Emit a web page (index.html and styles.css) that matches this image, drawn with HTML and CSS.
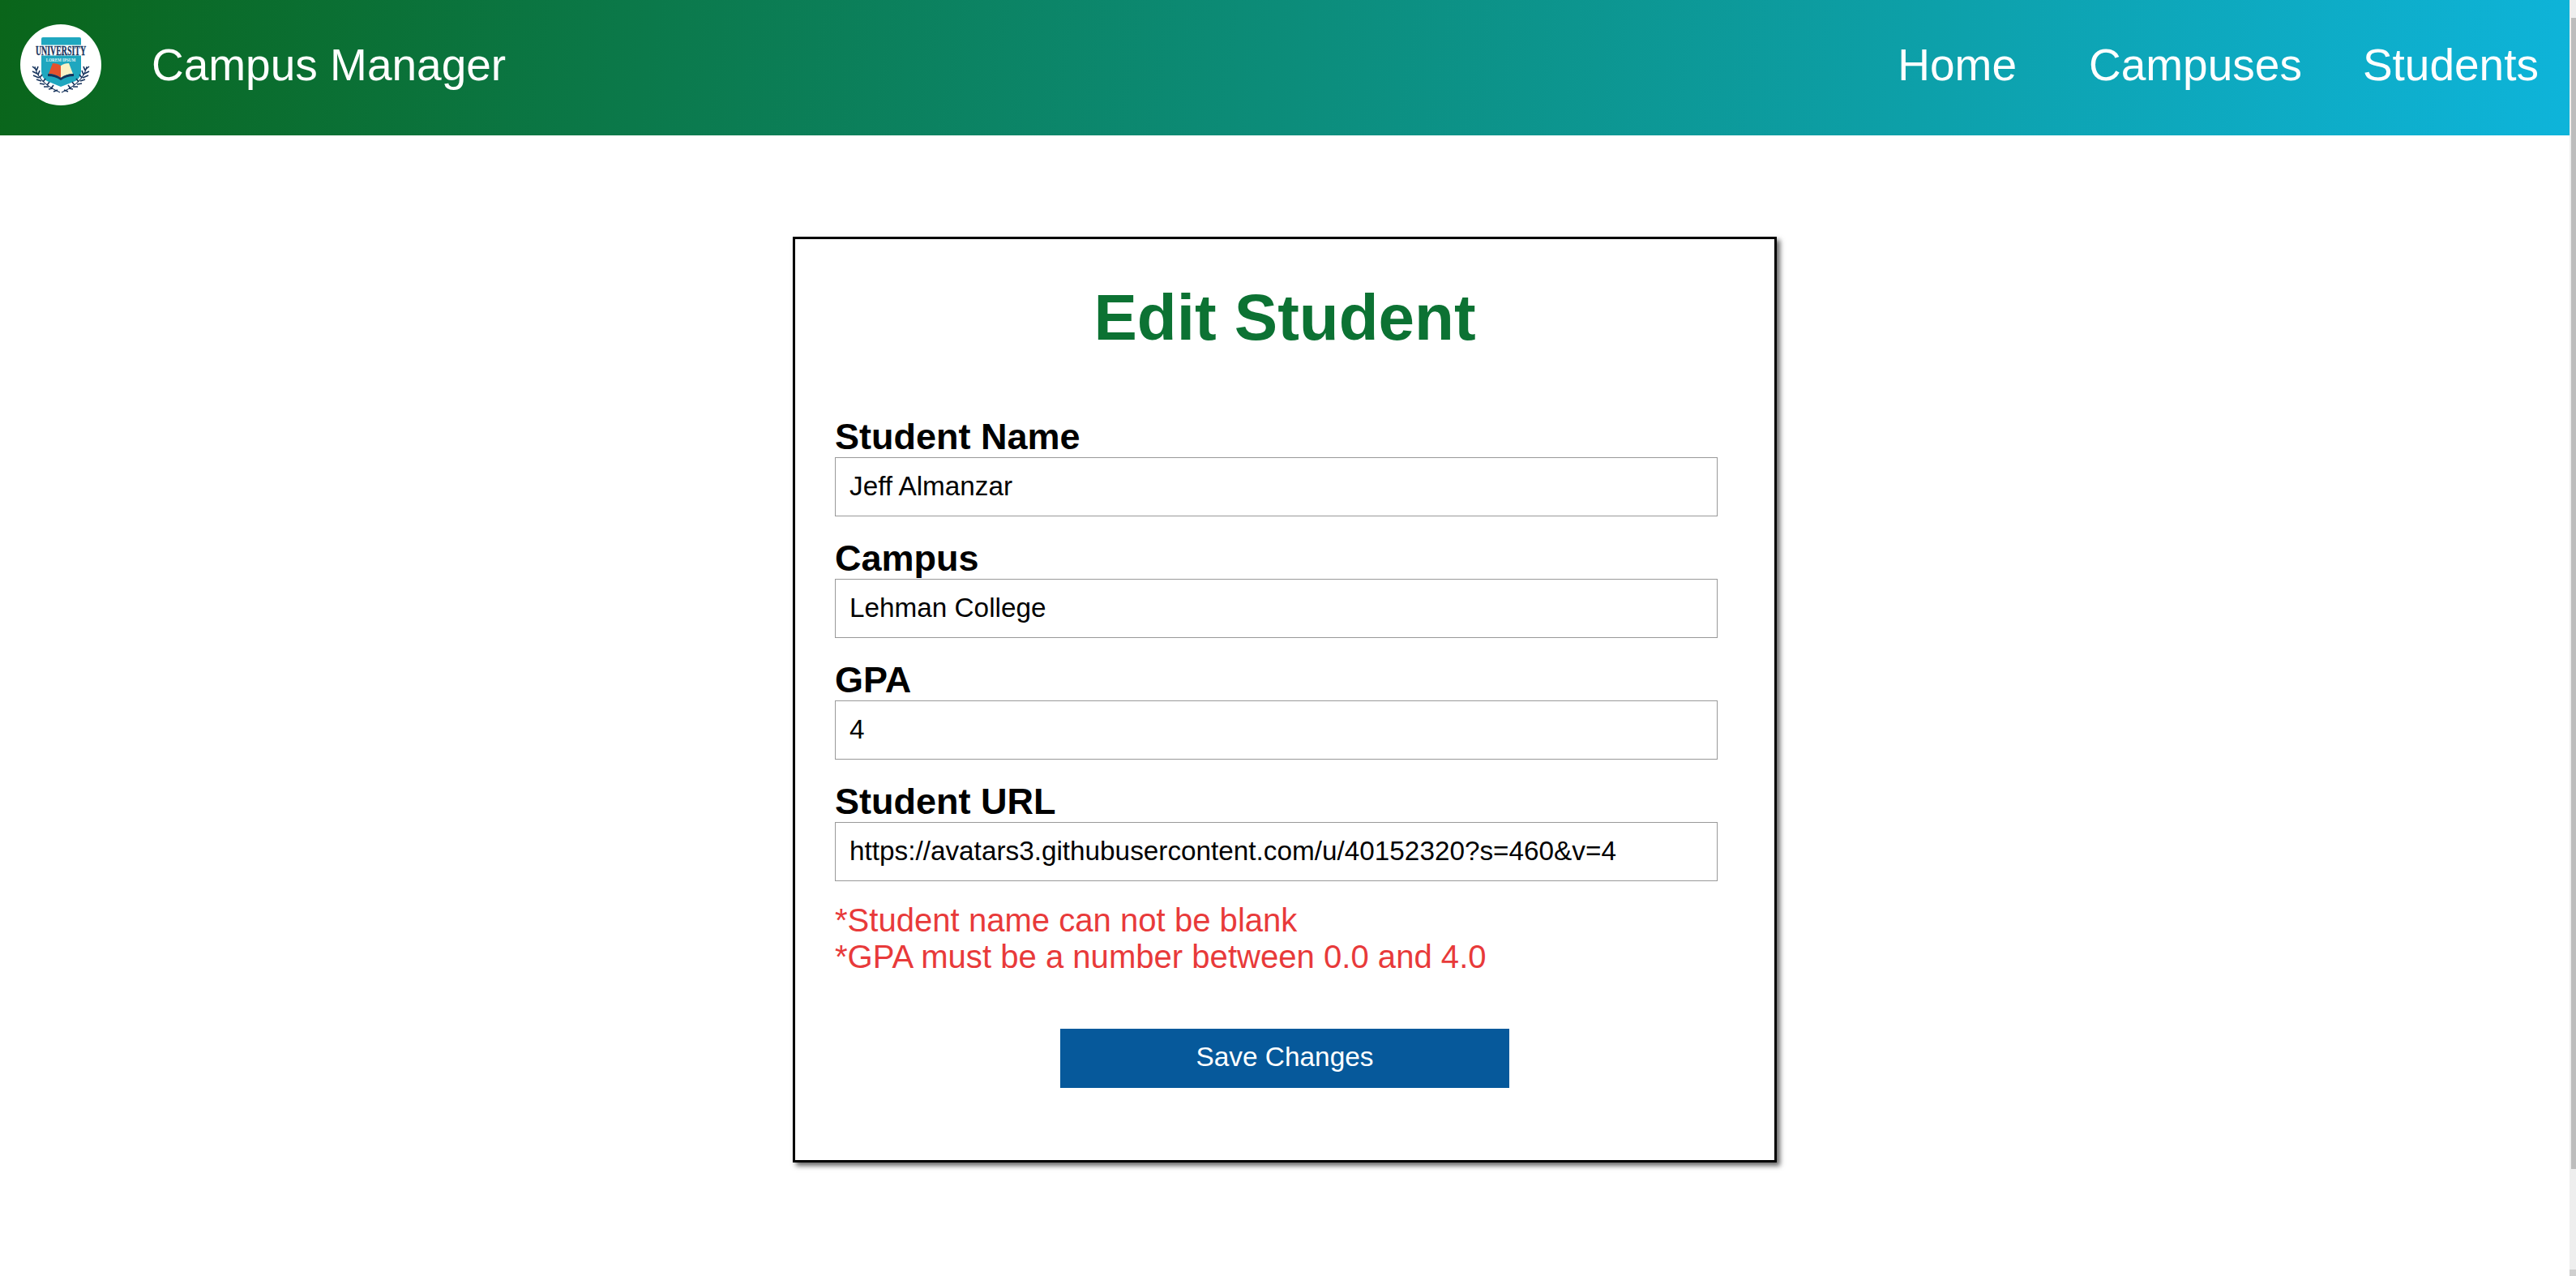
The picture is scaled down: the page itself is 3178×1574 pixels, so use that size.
FILE: index.html
```html
<!DOCTYPE html>
<html lang="en">
<head>
    <meta charset="UTF-8">
    <meta name="viewport" content="width=device-width, initial-scale=1.0">
    <title>Edit Student</title>

    <link rel="stylesheet" href="styles.css">

</head>
<body>

<div class="page">
  <nav class="navbar">
    <div class="nav-logo">
      <svg viewBox="0 0 100 100" width="100" height="100">
        <circle cx="50" cy="50" r="50" fill="#ffffff"/>
        <!-- shield -->
        <path d="M26 18 Q26 16 28 16 L73 16 Q75 16 75 18 L75 58 Q75 66 68 70 L50 77 L33 70 Q26 66 26 58 Z" fill="#1fa7bf"/>
        <rect x="13" y="25.500" width="74" height="13" fill="#ffffff"/>
        <text class="logo-title" transform="translate(50 37.700) scale(0.6 1)">UNIVERSITY</text>
        <text class="logo-sub" transform="translate(50 45.700) scale(0.72 1)">LOREM IPSUM</text>
        <!-- book -->
        <path d="M35 61 L40 48 Q46 48 50 51 L50 66 Q43 61 35 61 Z" fill="#e4512d"/>
        <path d="M50 51 Q54 48 60 48 L65 61 Q57 61 50 66 Z" fill="#fbf1c5"/>
        <path d="M34 61 Q43 61 50 66 Q57 61 66 61 L66 64 Q57 64 50 69 Q43 64 34 64 Z" fill="#16335c"/>
        <!-- laurels -->
        <path d="M18 52 Q22 72 49 84" fill="none" stroke="#16335c" stroke-width="1.200"/>
        <path d="M82 52 Q78 72 51 84" fill="none" stroke="#16335c" stroke-width="1.200"/>
        <path d="M15 52 L20 56 M15 58 L21 61 M16 63 L23 66 M20 68 L26 70 M24 73 L30 74 M29 77 L35 77 M35 80 L40 79 M41 83 L46 81 M22 52 L20 57 M24 57 L22 62 M27 62 L24 66 M31 67 L28 71 M36 71 L33 75 M41 75 L38 79" fill="none" stroke="#16335c" stroke-width="1.600"/>
        <path d="M85 52 L80 56 M85 58 L79 61 M84 63 L77 66 M80 68 L74 70 M76 73 L70 74 M71 77 L65 77 M65 80 L60 79 M59 83 L54 81 M78 52 L80 57 M76 57 L78 62 M73 62 L76 66 M69 67 L72 71 M64 71 L67 75 M59 75 L62 79" fill="none" stroke="#16335c" stroke-width="1.600"/>
      </svg>
    </div>
    <a class="nav-title" href="#">Campus Manager</a>
    <div class="nav-links">
      <a class="nav-home" href="#">Home</a>
      <a href="#">Campuses</a>
      <a href="#">Students</a>
    </div>
  </nav>

  <div class="form-container">
    <h1>Edit Student</h1>

    <form id="editForm">
      <label for="name">Student Name</label>
      <input type="text" id="name" value="Jeff Almanzar">

      <label for="campus">Campus</label>
      <input type="text" id="campus" value="Lehman College">

      <label for="gpa">GPA</label>
      <input type="text" id="gpa" value="4">

      <label for="url">Student URL</label>
      <input type="text" id="url" value="https://avatars3.githubusercontent.com/u/40152320?s=460&amp;v=4">

      <div class="error-message">
        <div>*Student name can not be blank</div>
        <div>*GPA must be a number between 0.0 and 4.0</div>
      </div>

      <button type="submit">Save Changes</button>
    </form>
  </div>
</div>

<!-- scrollbar as it shows in the screenshot -->
<div class="scrollbar">
  <div class="scrollbar-thumb"></div>
  <div class="scrollbar-end"></div>
</div>

</body>
</html>
```
FILE: styles.css
```css
* {
  box-sizing: border-box;
}

body {
  margin: 0;
  padding: 0;
  font-family: "Liberation Sans", Arial, sans-serif;
  background: #ffffff;
  display: flex;
  height: 100vh;
  overflow: hidden;
}

.page {
  flex: 1;
}

.scrollbar {
  width: 8px;
  height: 100%;
  padding-top: 22px;
  background: #eeeeee;
  display: flex;
  flex-direction: column;
  justify-content: space-between;
  align-items: flex-end;
}

.scrollbar-thumb {
  width: 6px;
  height: 1420px;
  background: #bdbdbd;
}

.scrollbar-end {
  width: 8px;
  height: 8px;
  background: #cfcfcf;
}

.navbar {
  display: flex;
  align-items: center;
  height: 167px;
  padding: 0 38px 7px 25px;
  background: linear-gradient(100deg, #0a651a, #0eb4da);
}

.nav-logo {
  width: 100px;
  height: 100px;
}

.nav-title {
  margin-left: 62px;
  font-size: 55px;
  color: #ffffff;
  text-decoration: none;
}

.nav-links {
  display: flex;
  margin-left: auto;
  gap: 75px;
}

.nav-links a {
  font-size: 55px;
  color: #ffffff;
  text-decoration: none;
}

.nav-links .nav-home {
  margin-right: 14px;
}

.logo-title {
  font-family: "Liberation Serif", serif;
  font-weight: bold;
  font-size: 16.500px;
  fill: #16335c;
  stroke: #16335c;
  stroke-width: 0.3px;
  text-anchor: middle;
}

.logo-sub {
  font-family: "Liberation Serif", serif;
  font-weight: bold;
  font-size: 7px;
  fill: #e6f6f8;
  text-anchor: middle;
}

.form-container {
  width: 1214px;
  margin: 125px auto 0;
  padding: 51px 70px 89px 49px;
  background: #ffffff;
  border: 3px solid #000000;
  box-shadow: 4px 4px 6px rgba(0, 0, 0, 0.6);
}

h1 {
  margin: 0 0 76px 0;
  padding-left: 21px;
  text-align: center;
  font-size: 80px;
  color: #0c7233;
}

label {
  display: block;
  margin-top: 27px;
  font-size: 45px;
  font-weight: bold;
  line-height: 50px;
  color: #000000;
}

input[type="text"] {
  display: block;
  width: 100%;
  height: 73px;
  padding: 0 17px 2px;
  border: 1px solid #999999;
  border-radius: 0;
  font-family: "Liberation Sans", Arial, sans-serif;
  font-size: 33.3px;
  color: #000000;
}

.error-message {
  margin-top: 26px;
  font-size: 40.1px;
  line-height: 45px;
  color: #e83a3a;
}

button {
  display: block;
  width: 554px;
  height: 73px;
  margin: 66px 0 0 278px;
  padding: 0 0 3px;
  background-color: #06599b;
  color: #ffffff;
  border: none;
  font-family: "Liberation Sans", Arial, sans-serif;
  font-size: 33.4px;
  cursor: pointer;
}
```
